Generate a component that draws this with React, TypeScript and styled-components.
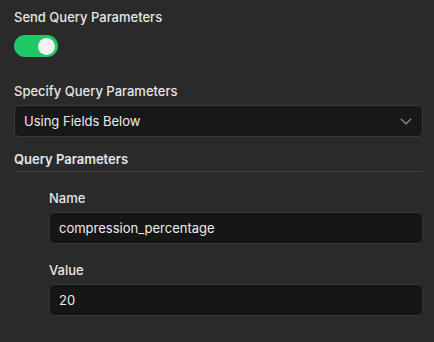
import React, { useState } from "react";
import styled, { createGlobalStyle } from "styled-components";

const Global = createGlobalStyle`
  body {
    margin: 0;
    background: #2a2a2a;
    font-family: Inter, "Noto Sans", sans-serif;
    color: #e8e8e8;
  }
`;

const Panel = styled.div`
  display: flex;
  flex-direction: column;
  align-items: stretch;
  padding: 9px 11px 20px 14px;
  width: 434px;
  height: 342px;
  box-sizing: border-box;
`;

const Label = styled.div<{ $weight?: number }>`
  font-size: 13px;
  line-height: 16px;
  font-weight: ${(p) => p.$weight ?? 500};
  color: #e6e6e6;
`;

const Toggle = styled.button<{ $on: boolean }>`
  position: relative;
  display: block;
  width: 44px;
  height: 22px;
  margin-top: 10px;
  border: none;
  padding: 0;
  border-radius: 11px;
  background: ${(p) => (p.$on ? "#1dc865" : "#555")};
  cursor: pointer;
`;

const Knob = styled.span<{ $on: boolean }>`
  position: absolute;
  top: 2.5px;
  left: ${(p) => (p.$on ? "24px" : "3px")};
  width: 17px;
  height: 17px;
  border-radius: 50%;
  background: #f2f2f2;
`;

const Field = styled.div<{ $top: number }>`
  display: flex;
  flex-direction: column;
  gap: 6px;
  margin-top: ${(p) => p.$top}px;
`;

const Select = styled.div`
  display: flex;
  align-items: center;
  justify-content: space-between;
  height: 32px;
  box-sizing: border-box;
  padding: 0 10px 0 9px;
  border: 1px solid #3a3a3a;
  border-radius: 5px;
  background: #181818;
  font-size: 13px;
  color: #ececec;
`;

const Section = styled.div`
  margin-top: 14px;
  padding-bottom: 4px;
  border-bottom: 1px solid #3d3d3d;
`;

const Nested = styled.div`
  display: flex;
  flex-direction: column;
  padding-left: 35px;
`;

const Input = styled.input`
  height: 32px;
  box-sizing: border-box;
  padding: 0 9px;
  border: 1px solid #363636;
  border-radius: 5px;
  background: #161616;
  color: #ececec;
  font-family: Inter, "Noto Sans", sans-serif;
  font-size: 13px;
  outline: none;
`;

export default function App() {
  const [on, setOn] = useState(true);
  return (
    <>
      <Global />
      <Panel>
        <Label>Send Query Parameters</Label>
        <Toggle $on={on} onClick={() => setOn(!on)}>
          <Knob $on={on} />
        </Toggle>
        <Field $top={26}>
          <Label>Specify Query Parameters</Label>
          <Select>
            <span>Using Fields Below</span>
            <svg width="12" height="7" viewBox="0 0 12 7" fill="none">
              <path d="M0.8 0.8 L6 5.8 L11.2 0.8" stroke="#8a8a8a" strokeWidth="1.2" />
            </svg>
          </Select>
        </Field>
        <Section>
          <Label $weight={600}>Query Parameters</Label>
        </Section>
        <Nested>
          <Field $top={18}>
            <Label>Name</Label>
            <Input defaultValue="compression_percentage" />
          </Field>
          <Field $top={18}>
            <Label>Value</Label>
            <Input defaultValue="20" />
          </Field>
        </Nested>
      </Panel>
    </>
  );
}
